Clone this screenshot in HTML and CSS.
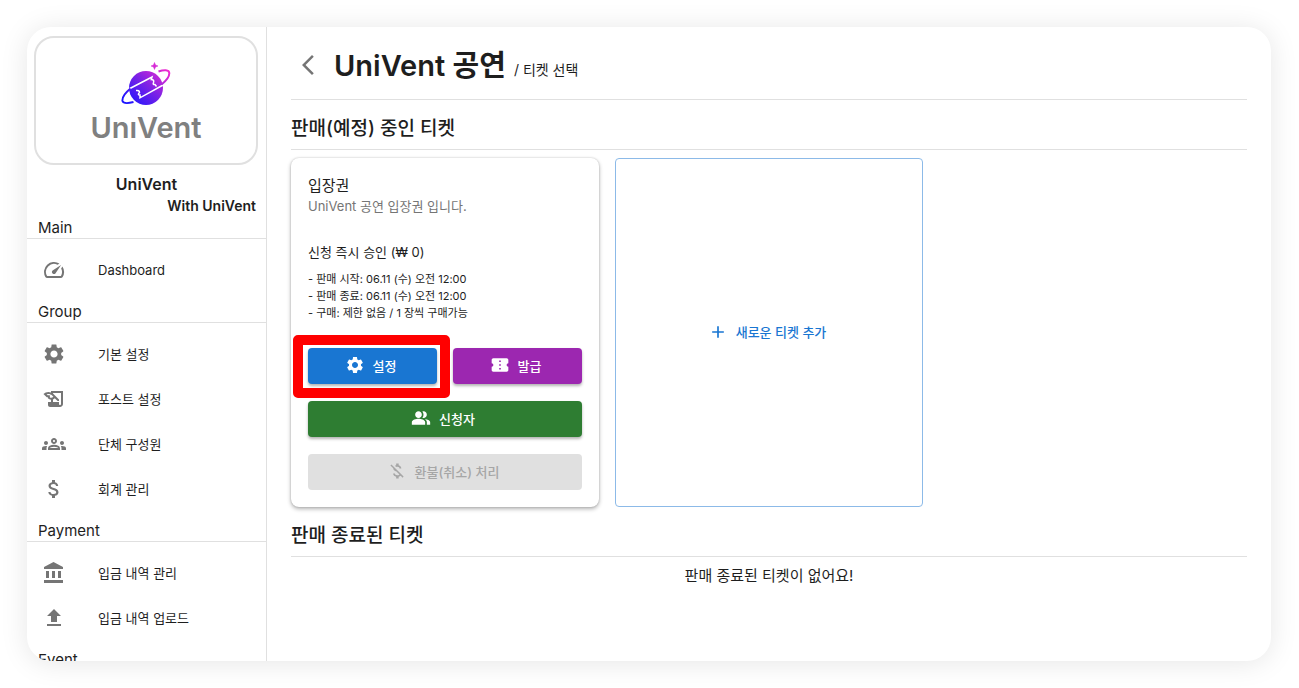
FILE: index.html
```html
<!DOCTYPE html>
<html lang="ko">
<head>
  <meta charset="UTF-8">
  <meta name="viewport" content="width=device-width, initial-scale=1.0">
  <title>UniVent</title>
  <link rel="stylesheet" href="styles.css">
</head>
<body>
  <div class="app">
    <aside class="sidebar">
      <div class="logo">
        <svg class="logo-mark" viewBox="0 0 50 44" aria-hidden="true">
          <defs>
            <linearGradient id="planet" gradientUnits="userSpaceOnUse" x1="8" y1="42" x2="42" y2="4">
              <stop offset="0" stop-color="#1d14ff"/>
              <stop offset="0.5" stop-color="#7a22e6"/>
              <stop offset="1" stop-color="#f02bd0"/>
            </linearGradient>
          </defs>
          <circle cx="25" cy="26" r="17" fill="url(#planet)"/>
          <path d="M6 28L31 15L30.300 17.500Q33.500 17.500 32.500 20.500Q31.500 23 34 22.500L35.500 24.500M15 28.500Q18.500 28 18.500 30.500Q16 33 19 33L19 35.800L43 22.500" fill="none" stroke="#fff" stroke-width="1.500"/>
          <path d="M37.500 9.500C43 7.500 48 7.500 48.300 11C48.500 15 45 19 40.500 22.500M9.500 26.500C4 31 1 35.500 1.500 39C2.500 42 7 41.500 12.500 40" fill="none" stroke="url(#planet)" stroke-width="2"/>
          <path d="M33.500 0.500L34.500 3L37 4L34.500 5L33.500 7.500L32.500 5L30 4L32.500 3Z" fill="#d62bd6" stroke="#d62bd6" stroke-width="0.500"/>
        </svg>
        <span class="logo-text">UnıVent</span>
      </div>
      <strong class="group-name">UniVent</strong>
      <strong class="group-with">With UniVent</strong>

      <nav>
        <h3 class="menu-title first">Main</h3>
        <div class="menu">
          <a class="menu-item" href="#">
            <svg class="icon" viewBox="0 0 24 24"><path d="m20.380 8.570-1.230 1.850a8 8 0 0 1-.22 7.580H5.070A8 8 0 0 1 15.580 6.850l1.850-1.230A10 10 0 0 0 3.350 19a2 2 0 0 0 1.720 1h13.850a2 2 0 0 0 1.740-1 10 10 0 0 0-.27-10.440zm-9.790 6.840a2 2 0 0 0 2.830 0l5.660-8.490-8.490 5.660a2 2 0 0 0 0 2.830z"/></svg>
            Dashboard
          </a>
        </div>

        <h3 class="menu-title">Group</h3>
        <div class="menu">
          <a class="menu-item" href="#">
            <svg class="icon" viewBox="0 0 24 24"><path d="M19.140 12.940c.04-.3.06-.61.06-.94 0-.32-.02-.64-.07-.94l2.030-1.580c.18-.14.23-.41.12-.61l-1.920-3.320c-.12-.22-.37-.29-.59-.22l-2.390.96c-.5-.38-1.030-.7-1.620-.94l-.36-2.540c-.04-.24-.24-.41-.48-.41h-3.840c-.24 0-.43.17-.47.41l-.36 2.540c-.59.24-1.130.57-1.620.94l-2.390-.96c-.22-.08-.47 0-.59.22L2.740 8.870c-.12.21-.08.47.12.61l2.030 1.580c-.05.3-.09.63-.09.94s.02.64.07.94l-2.030 1.580c-.18.14-.23.41-.12.61l1.920 3.320c.12.22.37.29.59.22l2.390-.96c.5.38 1.030.7 1.620.94l.36 2.540c.05.24.24.41.48.41h3.840c.24 0 .44-.17.47-.41l.36-2.540c.59-.24 1.130-.56 1.620-.94l2.390.96c.22.08.47 0 .59-.22l1.920-3.320c.12-.22.07-.47-.12-.61l-2.010-1.580zM12 15.600c-1.980 0-3.600-1.620-3.600-3.600s1.620-3.600 3.600-3.600 3.600 1.620 3.600 3.600-1.620 3.600-3.600 3.600z"/></svg>
            기본 설정
          </a>
          <a class="menu-item" href="#">
            <svg class="icon" viewBox="0 0 24 24"><path d="M9 4v1.380c-.83-.33-1.720-.5-2.610-.5-1.790 0-3.580.68-4.950 2.050l3.330 3.330h1.110v1.110c.86.86 1.980 1.310 3.110 1.360V15H6v3c0 1.100.9 2 2 2h10c1.660 0 3-1.340 3-3V4H9zm-1.110 6.410V8.260H5.610L4.570 7.220a5.070 5.070 0 0 1 1.820-.34c1.340 0 2.590.52 3.540 1.460l1.410 1.410-.2.2c-.51.51-1.190.8-1.920.8-.47 0-.93-.12-1.330-.34zM19 17c0 .55-.45 1-1 1s-1-.45-1-1v-2h-6v-2.590c.57-.23 1.100-.57 1.560-1.030l.2-.2L15.590 14H17v-1.410l-6-5.970V6h8v11z"/></svg>
            포스트 설정
          </a>
          <a class="menu-item" href="#">
            <svg class="icon" viewBox="0 0 24 24"><path d="M4 13c1.100 0 2-.9 2-2s-.9-2-2-2-2 .9-2 2 .9 2 2 2zm1.130 1.100c-.37-.06-.74-.1-1.130-.1-.99 0-1.930.21-2.780.58C.48 14.900 0 15.620 0 16.430V18h4.500v-1.610c0-.83.23-1.610.63-2.290zM20 13c1.100 0 2-.9 2-2s-.9-2-2-2-2 .9-2 2 .9 2 2 2zm4 3.430c0-.81-.48-1.530-1.220-1.850-.85-.37-1.790-.58-2.780-.58-.39 0-.76.04-1.130.1.4.68.63 1.460.63 2.290V18H24v-1.570zm-7.760-2.780c-1.170-.52-2.610-.9-4.240-.9-1.630 0-3.070.39-4.240.9C6.680 14.130 6 15.210 6 16.390V18h12v-1.610c0-1.180-.68-2.260-1.760-2.740zM8.070 16c.09-.23.13-.39.91-.69.97-.38 1.990-.56 3.020-.56s2.050.18 3.020.56c.77.3.81.46.91.69H8.070zM12 8c.55 0 1 .45 1 1s-.45 1-1 1-1-.45-1-1 .45-1 1-1m0-2c-1.660 0-3 1.340-3 3s1.340 3 3 3 3-1.340 3-3-1.340-3-3-3z"/></svg>
            단체 구성원
          </a>
          <a class="menu-item" href="#">
            <svg class="icon" viewBox="0 0 24 24"><path d="M11.800 10.900c-2.270-.59-3-1.200-3-2.150 0-1.090 1.010-1.850 2.700-1.850 1.780 0 2.440.85 2.500 2.100h2.210c-.07-1.720-1.120-3.300-3.210-3.810V3h-3v2.160c-1.940.42-3.500 1.680-3.500 3.610 0 2.310 1.910 3.460 4.700 4.130 2.500.6 3 1.480 3 2.410 0 .69-.49 1.790-2.700 1.790-2.060 0-2.870-.92-2.980-2.100h-2.200c.12 2.190 1.760 3.420 3.680 3.830V21h3v-2.150c1.950-.37 3.500-1.500 3.500-3.550 0-2.840-2.430-3.810-4.700-4.400z"/></svg>
            회계 관리
          </a>
        </div>

        <h3 class="menu-title">Payment</h3>
        <div class="menu">
          <a class="menu-item" href="#">
            <svg class="icon" viewBox="0 0 24 24"><path d="M4 10v7h3v-7H4zm6 0v7h3v-7h-3zM2 22h19v-3H2v3zm14-12v7h3v-7h-3zm-4.500-9L2 6v2h19V6l-9.500-5z"/></svg>
            입금 내역 관리
          </a>
          <a class="menu-item" href="#">
            <svg class="icon" viewBox="0 0 24 24"><path d="M5 20h14v-2H5v2zm0-10h4v6h6v-6h4l-7-7-7 7z"/></svg>
            입금 내역 업로드
          </a>
        </div>

        <h3 class="menu-title">Event</h3>
      </nav>
    </aside>

    <main class="content">
      <header class="page-header">
        <a class="back" href="#" aria-label="뒤로">
          <svg class="icon" viewBox="0 0 24 24"><path d="M17.770 3.770 16 2 6 12l10 10 1.770-1.770L9.540 12z"/></svg>
        </a>
        <h1>UniVent 공연</h1>
        <span class="crumb">/ 티켓 선택</span>
      </header>

      <section>
        <h2>판매(예정) 중인 티켓</h2>
        <div class="tickets">
          <article class="ticket">
            <h4 class="ticket-name">입장권</h4>
            <p class="ticket-desc">UniVent 공연 입장권 입니다.</p>
            <p class="ticket-price">신청 즉시 승인 (₩ 0)</p>
            <ul class="ticket-info">
              <li>- 판매 시작: 06.11 (수) 오전 12:00</li>
              <li>- 판매 종료: 06.11 (수) 오전 12:00</li>
              <li>- 구매: 제한 없음 / 1 장씩 구매가능</li>
            </ul>
            <div class="actions">
              <button class="btn blue focus-box" type="button">
                <svg viewBox="0 0 24 24"><path d="M19.140 12.940c.04-.3.06-.61.06-.94 0-.32-.02-.64-.07-.94l2.030-1.580c.18-.14.23-.41.12-.61l-1.920-3.320c-.12-.22-.37-.29-.59-.22l-2.390.96c-.5-.38-1.030-.7-1.620-.94l-.36-2.540c-.04-.24-.24-.41-.48-.41h-3.840c-.24 0-.43.17-.47.41l-.36 2.540c-.59.24-1.130.57-1.620.94l-2.390-.96c-.22-.08-.47 0-.59.22L2.740 8.870c-.12.21-.08.47.12.61l2.030 1.580c-.05.3-.09.63-.09.94s.02.64.07.94l-2.030 1.580c-.18.14-.23.41-.12.61l1.920 3.320c.12.22.37.29.59.22l2.390-.96c.5.38 1.030.7 1.620.94l.36 2.540c.05.24.24.41.48.41h3.840c.24 0 .44-.17.47-.41l.36-2.540c.59-.24 1.130-.56 1.620-.94l2.390.96c.22.08.47 0 .59-.22l1.920-3.320c.12-.22.07-.47-.12-.61l-2.010-1.580zM12 15.600c-1.980 0-3.600-1.620-3.600-3.600s1.620-3.600 3.600-3.600 3.600 1.620 3.600 3.600-1.620 3.600-3.600 3.600z"/></svg>
                설정
              </button>
              <button class="btn purple" type="button">
                <svg viewBox="0 0 24 24"><path d="M22 10V6c0-1.110-.9-2-2-2H4c-1.100 0-1.990.89-1.990 2v4c1.100 0 1.990.9 1.990 2s-.89 2-2 2v4c0 1.100.9 2 2 2h16c1.100 0 2-.9 2-2v-4c-1.100 0-2-.9-2-2s.9-2 2-2zm-9 7.500h-2v-2h2v2zm0-4.500h-2v-2h2v2zm0-4.500h-2v-2h2v2z"/></svg>
                발급
              </button>
              <button class="btn green wide" type="button">
                <svg viewBox="0 0 24 24"><path d="M16.670 13.130C18.040 14.060 19 15.320 19 17v3h4v-3c0-2.180-3.570-3.470-6.330-3.870zM15 12c2.210 0 4-1.790 4-4s-1.790-4-4-4c-.47 0-.91.1-1.330.24C14.500 5.270 15 6.580 15 8s-.5 2.730-1.330 3.760c.42.14.86.24 1.330.24zM9 12c2.210 0 4-1.790 4-4s-1.790-4-4-4-4 1.790-4 4 1.790 4 4 4zm0 1c-2.670 0-8 1.340-8 4v3h16v-3c0-2.660-5.330-4-8-4z"/></svg>
                신청자
              </button>
              <button class="btn wide" type="button" disabled>
                <svg viewBox="0 0 24 24"><path d="M12.500 6.900c1.780 0 2.440.85 2.500 2.100h2.210c-.07-1.720-1.120-3.300-3.210-3.810V3h-3v2.160c-.53.12-1.030.3-1.480.54l1.470 1.470c.41-.17.91-.27 1.510-.27zM5.330 4.060 4.060 5.330 7.500 8.770c0 2.080 1.560 3.210 3.910 3.910l3.510 3.510c-.34.48-1.050.91-2.420.91-2.060 0-2.870-.92-2.980-2.100h-2.200c.12 2.190 1.760 3.420 3.680 3.830V21h3v-2.150c.96-.18 1.820-.55 2.450-1.120l2.220 2.220 1.270-1.270L5.330 4.060z"/></svg>
                환불(취소) 처리
              </button>
            </div>
          </article>

          <button class="add-ticket" type="button">
            <svg viewBox="0 0 24 24"><path d="M19 13h-6v6h-2v-6H5v-2h6V5h2v6h6v2z"/></svg>
            새로운 티켓 추가
          </button>
        </div>
      </section>

      <section>
        <h2>판매 종료된 티켓</h2>
        <p class="empty">판매 종료된 티켓이 없어요!</p>
      </section>
    </main>
  </div>
</body>
</html>
```
FILE: styles.css
```css
* {
  box-sizing: border-box;
}

body {
  margin: 0;
  height: 100vh;
  padding: 27px 28px 27px 27px;
  display: flex;
  background: #fff;
  color: #1e1e1e;
  font-family: Inter, "Noto Sans CJK KR", sans-serif;
  font-size: 13px;
}

h1, h2, h3, h4, p, ul {
  margin: 0;
  padding: 0;
}

a {
  color: inherit;
  text-decoration: none;
}

svg {
  fill: currentColor;
  flex-shrink: 0;
}

.app {
  flex: 1;
  display: flex;
  overflow: hidden;
  background: #fff;
  border-radius: 24px;
  box-shadow: 0 2px 28px rgba(0, 0, 0, 0.1);
}

/* Sidebar */
.sidebar {
  width: 240px;
  flex-shrink: 0;
  display: flex;
  flex-direction: column;
  border-right: 1px solid #e0e0e0;
}

.logo {
  height: 129px;
  flex-shrink: 0;
  margin: 9px 8px 8px 7px;
  padding-top: 24px;
  display: flex;
  flex-direction: column;
  align-items: center;
  border: 2px solid #e0e0e0;
  border-radius: 20px;
}

.logo-mark {
  width: 50px;
  height: 44px;
}

.logo-text {
  color: #808080;
  font-size: 29px;
  font-weight: 600;
  line-height: 44px;
}

.group-name,
.group-with {
  line-height: 22px;
  font-weight: 600;
}

.group-name {
  font-size: 16px;
  text-align: center;
}

.group-with {
  padding-right: 10px;
  font-size: 14px;
  text-align: right;
}

.menu-title {
  height: 23px;
  padding-left: 11px;
  border-bottom: 1px solid #e0e0e0;
  font-size: 15px;
  font-weight: 400;
  line-height: 24px;
}

.menu-title.first {
  height: 22px;
  line-height: 22px;
}

.menu {
  padding: 8px 0;
}

.menu-item {
  height: 45px;
  padding-left: 15px;
  display: flex;
  align-items: center;
  gap: 32px;
}

.icon {
  width: 24px;
  height: 24px;
  color: #757575;
}

/* Content */
.content {
  flex: 1;
  padding: 0 24px;
}

.page-header {
  height: 73px;
  padding: 4px 0 0 5px;
  display: flex;
  align-items: center;
  border-bottom: 1px solid #e0e0e0;
}

.back {
  display: flex;
  margin-right: 14px;
}

h1 {
  margin-bottom: 4px;
  font-size: 29px;
  font-weight: 600;
}

.crumb {
  margin: 8px 0 0 8px;
  font-size: 14px;
}

h2 {
  height: 50px;
  padding-top: 8px;
  border-bottom: 1px solid #e0e0e0;
  font-size: 19px;
  font-weight: 500;
  line-height: 42px;
}

.tickets {
  margin-top: 8px;
  display: grid;
  grid-template-columns: repeat(3, 1fr);
  gap: 16px;
}

.ticket {
  padding: 17px;
  border-radius: 8px;
  box-shadow: 0 2px 4px rgba(0, 0, 0, 0.3), 0 0 2px rgba(0, 0, 0, 0.2);
}

.ticket-name {
  font-size: 15px;
  font-weight: 400;
  line-height: 21px;
}

.ticket-desc {
  color: #757575;
  line-height: 21px;
}

.ticket-price {
  margin: 25px 0 9px;
  line-height: 20px;
}

.ticket-info {
  list-style: none;
  font-size: 11px;
  line-height: 17px;
}

.actions {
  margin-top: 26px;
  display: grid;
  grid-template-columns: 1fr 1fr;
  gap: 17px 16px;
}

.btn {
  height: 36px;
  padding: 0 8px 2px 4px;
  display: flex;
  align-items: center;
  justify-content: center;
  gap: 8px;
  border: none;
  border-radius: 4px;
  color: #fff;
  font-family: inherit;
  font-size: 13px;
  font-weight: 500;
  box-shadow: 0 2px 3px rgba(0, 0, 0, 0.3);
  cursor: pointer;
}

.btn svg,
.add-ticket svg {
  width: 20px;
  height: 20px;
}

.btn.wide {
  grid-column: span 2;
}

.btn.blue {
  background: #1976d2;
}

.btn.purple {
  background: #9c27b0;
}

.btn.green {
  background: #2e7d32;
}

.btn:disabled {
  background: #e0e0e0;
  color: #a6a6a6;
  box-shadow: none;
  cursor: default;
}

/* red marker around the settings button */
.focus-box {
  position: relative;
}

.focus-box::after {
  content: "";
  position: absolute;
  inset: -13px -13px -14px -15px;
  border: 10px solid #f00;
  border-radius: 5px;
  pointer-events: none;
}

.add-ticket {
  padding: 0 8px 2px 4px;
  display: flex;
  align-items: center;
  justify-content: center;
  gap: 8px;
  background: none;
  border: 1px solid #8cbae8;
  border-radius: 4px;
  color: #1976d2;
  font-family: inherit;
  font-size: 13px;
  font-weight: 500;
  cursor: pointer;
}

.empty {
  padding-top: 8px;
  font-size: 15px;
  line-height: 22px;
  text-align: center;
}
```
